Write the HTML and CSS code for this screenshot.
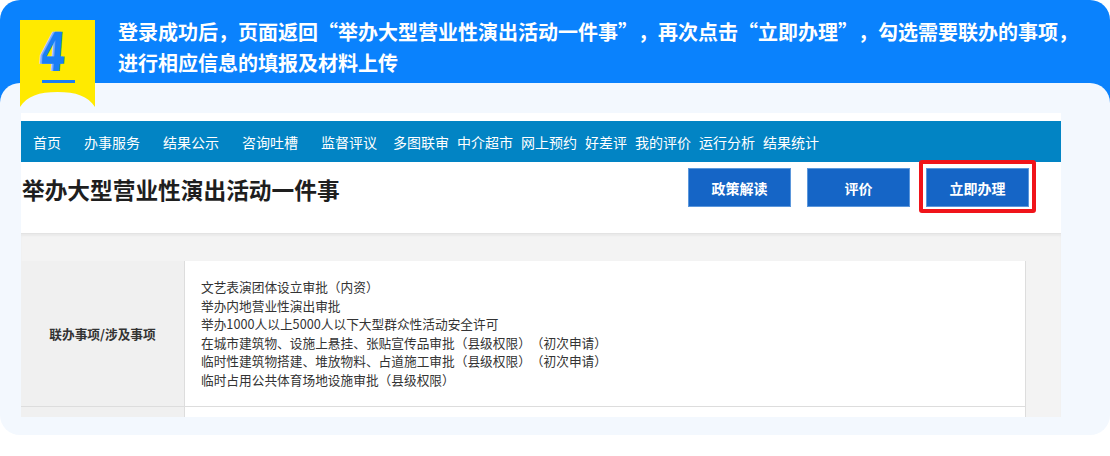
FILE: index.html
```html
<!DOCTYPE html>
<html lang="zh-CN">
<head>
<meta charset="utf-8">
<title>立即办理</title>
<link rel="stylesheet" href="styles.css">
</head>
<body>
<div class="card">
  <div class="badge">
    <svg class="badge-bg" width="75" height="87" viewBox="0 0 75 87"><path d="M0 0H75V87C68 76 56 72 37.5 72C19 72 7 76 0 87Z" fill="#ffea00"/></svg>
    <span class="badge-num">4</span>
    <span class="badge-line"></span>
  </div>
  <div class="head">
    <p class="head-text">登录成功后，页面返回“举办大型营业性演出活动一件事”，再次点击“立即办理”，勾选需要联办的事项，<br>进行相应信息的填报及材料上传</p>
  </div>
  <div class="panel">
    <div class="shot">
      <nav class="nav">
        <span class="nav-item wide">首页</span>
        <span class="nav-item wide">办事服务</span>
        <span class="nav-item wide">结果公示</span>
        <span class="nav-item wide">咨询吐槽</span>
        <span class="nav-item mid">监督评议</span>
        <span class="nav-item">多图联审</span>
        <span class="nav-item">中介超市</span>
        <span class="nav-item">网上预约</span>
        <span class="nav-item">好差评</span>
        <span class="nav-item">我的评价</span>
        <span class="nav-item">运行分析</span>
        <span class="nav-item">结果统计</span>
      </nav>
      <div class="titlebar">
        <h1 class="title">举办大型营业性演出活动一件事</h1>
        <div class="actions">
          <button class="btn">政策解读</button>
          <button class="btn">评价</button>
          <span class="hl"><button class="btn">立即办理</button></span>
        </div>
      </div>
      <div class="content">
        <div class="table">
          <div class="row">
            <div class="th">联办事项/涉及事项</div>
            <div class="td">
              <div class="items">
                <div>文艺表演团体设立审批（内资）</div>
                <div>举办内地营业性演出审批</div>
                <div>举办1000人以上5000人以下大型群众性活动安全许可</div>
                <div>在城市建筑物、设施上悬挂、张贴宣传品审批（县级权限）（初次申请）</div>
                <div>临时性建筑物搭建、堆放物料、占道施工审批（县级权限）（初次申请）</div>
                <div>临时占用公共体育场地设施审批（县级权限）</div>
              </div>
            </div>
          </div>
          <div class="row row-next">
            <div class="th"></div>
            <div class="td"></div>
          </div>
        </div>
      </div>
    </div>
  </div>
</div>
</body>
</html>
```
FILE: styles.css
```css
* { box-sizing: border-box; }
html, body { margin: 0; padding: 0; background: #ffffff; }
body {
  width: 1110px;
  height: 456px;
  overflow: hidden;
  font-family: "Noto Sans CJK SC", "Noto Sans", sans-serif;
  text-spacing-trim: space-all;
}
.card {
  position: relative;
  width: 1110px;
  height: 435px;
  border-radius: 20px 20px 0 0;
  background: linear-gradient(#0a82fd 0, #0a82fd 120px, transparent 120px);
}
.badge {
  position: absolute;
  left: 20px;
  top: 20px;
  width: 75px;
  height: 87px;
  z-index: 2;
}
.badge-bg { position: absolute; left: 0; top: 0; display: block; }
.badge-num {
  position: absolute;
  left: 23px;
  top: 2px;
  font-family: "DejaVu Sans", sans-serif;
  font-weight: bold;
  font-size: 54px;
  line-height: 62px;
  color: #1a7ef6;
  transform: scaleX(0.68) skewX(-6deg);
  transform-origin: left top;
  text-shadow: -3px 0 0 #77b6ff;
}
.badge-line {
  position: absolute;
  left: 22px;
  top: 60px;
  width: 33px;
  height: 3px;
  background: #1a7ef6;
}
.head {
  height: 83px;
  padding: 16px 0 0 118px;
}
.head-text {
  margin: 0;
  color: #ffffff;
  font-size: 20px;
  font-weight: bold;
  line-height: 31px;
  white-space: nowrap;
  font-feature-settings: "fwid" 1;
}
.panel {
  height: 352px;
  background: #f3f8fe;
  border-radius: 20px;
  padding: 30px 0 0 21px;
}
.shot {
  width: 1040px;
  height: 304px;
  overflow: hidden;
  background: #ffffff;
  padding-top: 8px;
}
.nav {
  height: 41px;
  background: #0284c4;
  display: flex;
  align-items: center;
  padding-left: 12px;
  color: #ffffff;
  font-size: 14px;
  line-height: 20px;
}
.nav-item { margin-right: 8px; white-space: nowrap; }
.nav-item.wide { margin-right: 23px; }
.nav-item.mid { margin-right: 16px; }
.titlebar {
  height: 71px;
  display: flex;
  justify-content: space-between;
  align-items: flex-start;
  padding: 6px 32px 0 1px;
}
.title {
  margin: 7px 0 0;
  font-size: 22.7px;
  line-height: 30px;
  font-weight: bold;
  color: #1e1e1e;
  white-space: nowrap;
}
.actions { display: flex; gap: 16px; }
.btn {
  width: 103px;
  height: 39px;
  border: 1px solid #5b97dc;
  background: #1565c6;
  color: #ffffff;
  font-family: "Noto Sans CJK SC", sans-serif;
  font-size: 14px;
  font-weight: bold;
  padding: 0;
  display: block;
}
.hl { position: relative; display: block; }
.hl::after {
  content: "";
  position: absolute;
  left: -7px;
  right: -7px;
  top: -8px;
  bottom: -6px;
  border: 4px solid #f0141a;
  border-radius: 3px;
}
.content {
  background: #f3f3f3;
  border-top: 1px solid #e3e3e3;
  box-shadow: inset 0 2px 2px rgba(0, 0, 0, 0.04);
  height: 200px;
  padding: 27px 35px 0 0;
}
.table { width: 1005px; }
.row { display: flex; border-bottom: 1px solid #dddddd; }
.row .th {
  width: 164px;
  background: #f0f0f0;
  border-right: 1px solid #dddddd;
  display: flex;
  align-items: center;
  justify-content: center;
  font-size: 12.7px;
  font-weight: bold;
  color: #333333;
}
.row .td {
  flex: 1;
  background: #ffffff;
  border-right: 1px solid #dddddd;
  display: flex;
  align-items: center;
  padding-left: 16px;
}
.row:first-child { height: 146px; }
.row-next { height: 30px; border-bottom: 0; }
.items {
  font-size: 12.7px;
  line-height: 18.5px;
  color: #333333;
}
```
